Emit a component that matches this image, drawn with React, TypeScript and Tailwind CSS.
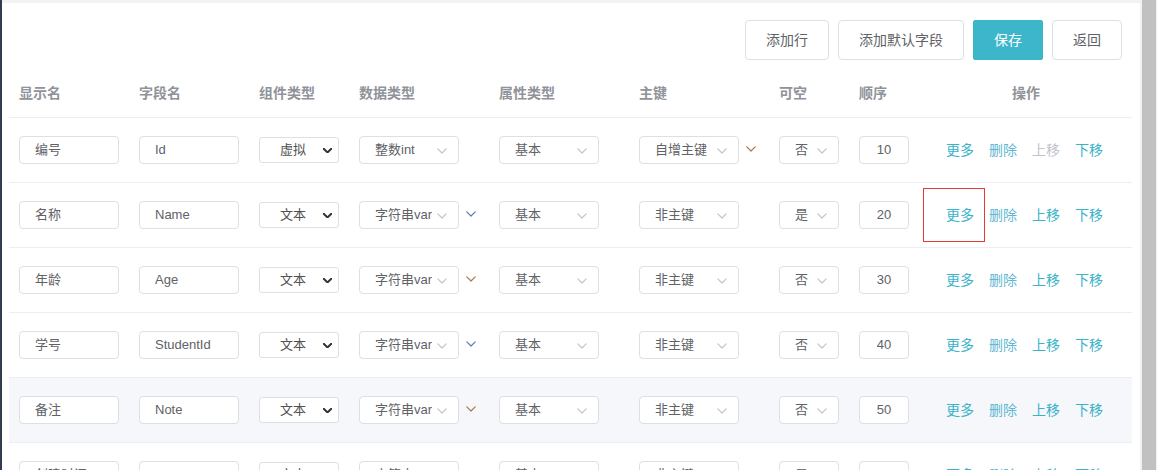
import React from "react";

type Row = {
  name: string;
  field: string;
  comp: string;
  dtype: string;
  dtypeExtra?: string;
  attr: string;
  pk: string;
  pkExtra?: string;
  nullable: string;
  order: string;
  upDisabled?: boolean;
  highlight?: boolean;
  box?: boolean;
};

const rows: Row[] = [
  { name: "编号", field: "Id", comp: "虚拟", dtype: "整数int", attr: "基本", pk: "自增主键", pkExtra: "#a9774f", nullable: "否", order: "10", upDisabled: true },
  { name: "名称", field: "Name", comp: "文本", dtype: "字符串var", dtypeExtra: "#5b7fae", attr: "基本", pk: "非主键", nullable: "是", order: "20", box: true },
  { name: "年龄", field: "Age", comp: "文本", dtype: "字符串var", dtypeExtra: "#a9774f", attr: "基本", pk: "非主键", nullable: "否", order: "30" },
  { name: "学号", field: "StudentId", comp: "文本", dtype: "字符串var", dtypeExtra: "#5b7fae", attr: "基本", pk: "非主键", nullable: "否", order: "40" },
  { name: "备注", field: "Note", comp: "文本", dtype: "字符串var", dtypeExtra: "#a9774f", attr: "基本", pk: "非主键", nullable: "否", order: "50", highlight: true },
  { name: "创建时间", field: "CreateTime", comp: "文本", dtype: "字符串var", attr: "基本", pk: "非主键", nullable: "是", order: "60" },
];

const Chevron = ({ color = "#c0c4cc", size = 10, sw = 1.2 }: { color?: string; size?: number; sw?: number }) => (
  <svg width={size} height={size * 0.6} viewBox="0 0 10 6" fill="none">
    <path d="M0.8 0.8 L5 5 L9.2 0.8" stroke={color} strokeWidth={sw} strokeLinecap="round" strokeLinejoin="round" />
  </svg>
);

const TextInput = ({ value, w, center }: { value: string; w: string; center?: boolean }) => (
  <div
    className={`${w} h-[28px] flex items-center border border-[#dcdfe6] rounded-[4px] bg-white text-[13px] text-[#606266] overflow-hidden whitespace-nowrap ${
      center ? "justify-center" : "pl-[15px]"
    }`}
  >
    {value}
  </div>
);

const ElSelect = ({ value, w, extra }: { value: string; w: string; extra?: string }) => (
  <div className="flex items-center">
    <div className={`${w} h-[28px] relative flex items-center border border-[#dcdfe6] rounded-[4px] bg-white pl-[15px] text-[13px] text-[#606266]`}>
      <span className="whitespace-nowrap overflow-hidden">{value}</span>
      <span className="absolute right-[11px] top-[11px]">
        <Chevron />
      </span>
    </div>
    {extra && (
      <span className="ml-[7px] mt-[-2px]">
        <Chevron color={extra} />
      </span>
    )}
  </div>
);

const NativeSelect = ({ value }: { value: string }) => (
  <div className="w-[80px] h-[26px] relative flex items-center border border-[#dcdfe6] rounded-[3px] bg-white pl-[20px] text-[13px] text-[#505050]">
    {value}
    <span className="absolute right-[6px] top-[10px]">
      <Chevron color="#333" size={9} sw={2.2} />
    </span>
  </div>
);

export default function App() {
  return (
    <div
      className="w-[1157px] h-[470px] flex overflow-hidden bg-white"
      style={{ fontFamily: '"Liberation Sans", Arial, "Noto Sans CJK SC", sans-serif' }}
    >
      <div className="w-[2px] bg-[#2f3d4f] shrink-0" />
      <div className="w-[1138px] flex flex-col shrink-0">
        <div className="h-[3px] bg-[#f2f2f2] shrink-0" />
        <div className="flex justify-end gap-[9px] pt-[17px] pr-[18px] shrink-0">
          <div className="h-[40px] w-[84px] flex items-center justify-center border border-[#dcdfe6] rounded-[4px] text-[14px] text-[#606266] bg-white">
            添加行
          </div>
          <div className="h-[40px] w-[126px] flex items-center justify-center border border-[#dcdfe6] rounded-[4px] text-[14px] text-[#606266] bg-white">
            添加默认字段
          </div>
          <div className="h-[40px] w-[70px] flex items-center justify-center border border-[#3db6cc] rounded-[2px] text-[14px] text-white bg-[#3db6cc]">
            保存
          </div>
          <div className="h-[40px] w-[70px] flex items-center justify-center border border-[#dcdfe6] rounded-[4px] text-[14px] text-[#606266] bg-white">
            返回
          </div>
        </div>
        <div className="ml-[7px] w-[1123px] shrink-0">
          <div className="grid grid-cols-[120px_120px_100px_140px_140px_140px_80px_71px_212px] h-[58px] pt-[10px] items-center border-b border-[#ebeef5] text-[14px] font-bold text-[#909399]">
            <div className="pl-[10px]">显示名</div>
            <div className="pl-[10px]">字段名</div>
            <div className="pl-[10px]">组件类型</div>
            <div className="pl-[10px]">数据类型</div>
            <div className="pl-[10px]">属性类型</div>
            <div className="pl-[10px]">主键</div>
            <div className="pl-[10px]">可空</div>
            <div className="pl-[10px]">顺序</div>
            <div className="text-center">操作</div>
          </div>
          {rows.map((r, i) => (
            <div
              key={i}
              className={`grid grid-cols-[120px_120px_100px_140px_140px_140px_80px_71px_212px] h-[65px] items-center border-b border-[#ebeef5] ${
                r.highlight ? "bg-[#f5f7fa]" : "bg-white"
              }`}
            >
              <div className="pl-[10px]">
                <TextInput value={r.name} w="w-[100px]" />
              </div>
              <div className="pl-[10px]">
                <TextInput value={r.field} w="w-[100px]" />
              </div>
              <div className="pl-[10px]">
                <NativeSelect value={r.comp} />
              </div>
              <div className="pl-[10px]">
                <ElSelect value={r.dtype} w="w-[100px]" extra={r.dtypeExtra} />
              </div>
              <div className="pl-[10px]">
                <ElSelect value={r.attr} w="w-[100px]" />
              </div>
              <div className="pl-[10px]">
                <ElSelect value={r.pk} w="w-[100px]" extra={r.pkExtra} />
              </div>
              <div className="pl-[10px]">
                <ElSelect value={r.nullable} w="w-[60px]" />
              </div>
              <div className="pl-[10px]">
                <TextInput value={r.order} w="w-[50px]" center />
              </div>
              <div className="relative h-full flex items-center pl-[26px] gap-[15px] text-[14px]">
                {r.box && (
                  <div className="absolute left-[3px] top-[5px] w-[62px] h-[54px] border border-[#e53935]" />
                )}
                <span className="text-[#3cb2c9]">更多</span>
                <span className="text-[#5fb8d2]">删除</span>
                <span className={r.upDisabled ? "text-[#c0c4cc]" : "text-[#3cb2c9]"}>上移</span>
                <span className="text-[#3cb2c9]">下移</span>
              </div>
            </div>
          ))}
        </div>
      </div>
      <div className="w-[17px] shrink-0 bg-[#f1f1f1] pl-[2px] pr-[1px]">
        <div className="h-full bg-[#c1c1c1]" />
      </div>
    </div>
  );
}
